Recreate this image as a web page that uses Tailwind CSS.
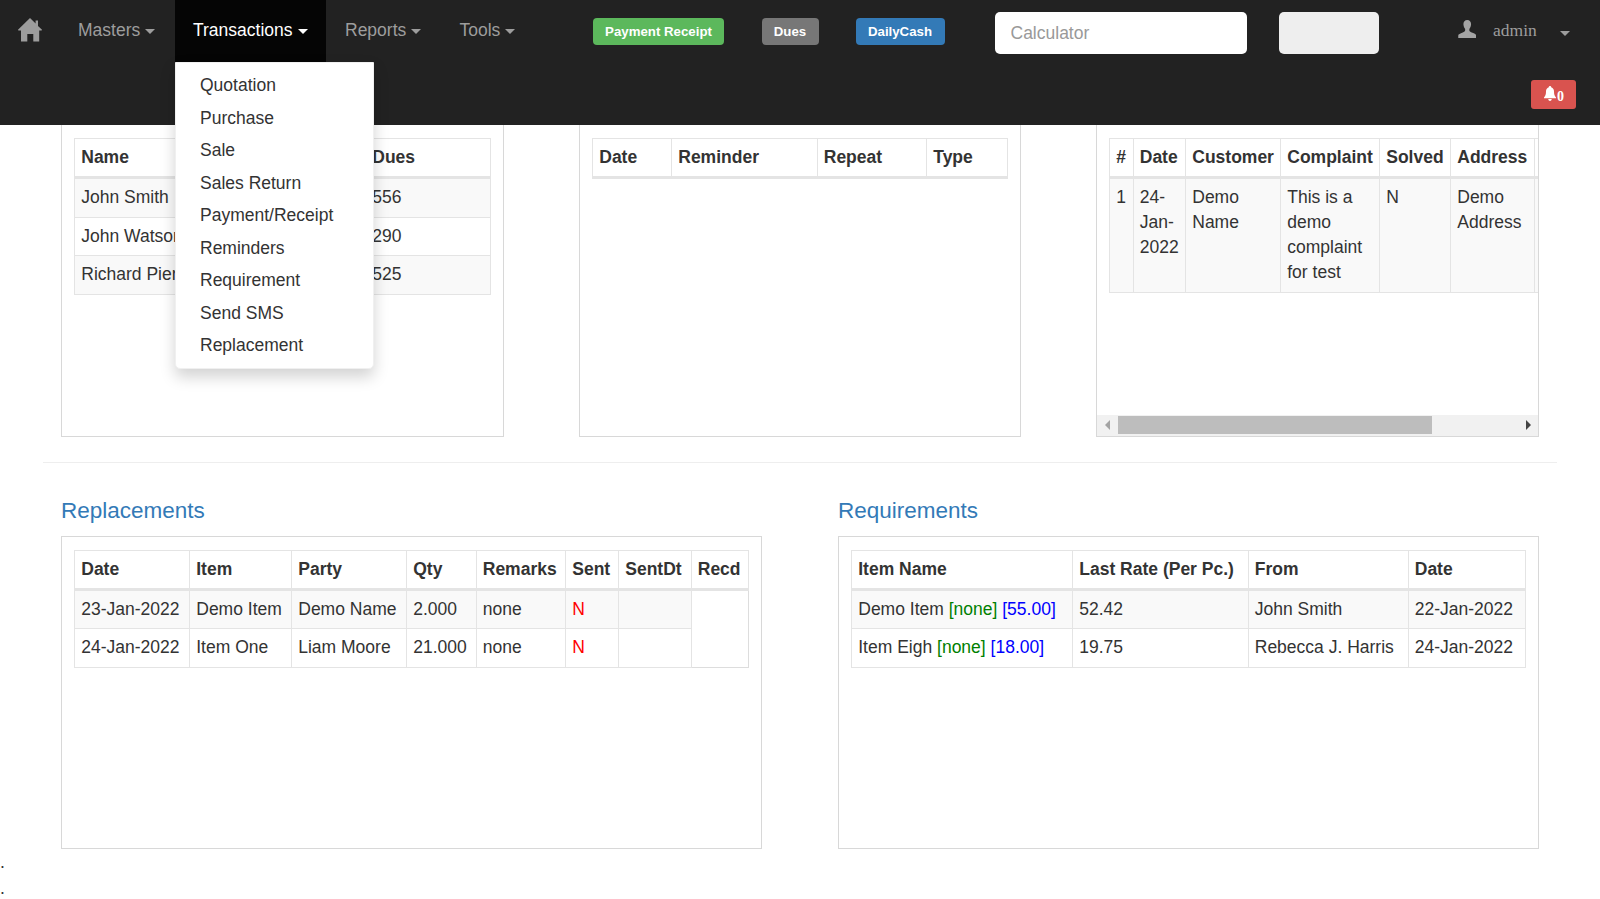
<!DOCTYPE html>
<html lang="en">
<head>
    <meta charset="UTF-8">
    <title>Dashboard</title>
    <script src="https://cdn.jsdelivr.net/npm/@tailwindcss/browser@4"></script>
</head>
<body class="h-[899px] overflow-hidden bg-white font-['Liberation_Sans',Arial,sans-serif] text-[17.5px] leading-[25px] text-[#333]">

    <!-- navbar -->
    <header class="relative z-10 flex h-[125px] flex-col bg-[#222] text-[#9d9d9d]">
        <div class="flex h-[62px] items-start">
            <nav class="flex h-[62px] w-[593px] items-stretch">
                <a class="flex w-[60px] items-start pl-[18px] pt-[17.5px]">
                    <svg class="h-[24px] w-[24px]" viewBox="0 0 24 24" fill="#9d9d9d"><path d="M12 0 L17.6 5.6 V2.5 H20 V8 L24.3 12 L23 12.6 H21.2 V23.5 H15.3 V16 H9.3 V23.5 H3 V12.6 H1 L-.3 12 Z"/></svg>
                </a>
                <a class="flex w-[115px] items-center pb-[1px] pl-[18px]">Masters<span class="ml-[5px] mt-[2px] border-x-[5px] border-t-[5px] border-x-transparent border-t-[#9d9d9d]"></span></a>
                <div class="relative w-[151px] bg-[#050505]">
                    <a class="flex h-[62px] items-center pb-[1px] pl-[18px] text-white">Transactions<span class="ml-[5px] mt-[2px] border-x-[5px] border-t-[5px] border-x-transparent border-t-white"></span></a>
                    <ul class="absolute left-0 top-[62px] w-[199px] rounded-b-[5px] border border-[#f0f0f0] bg-white pb-[5.5px] pt-[6.5px] text-[#333] shadow-[0_7.5px_15px_rgba(0,0,0,0.175)]">
                        <li class="py-[3.75px] pl-[24px]">Quotation</li>
                        <li class="py-[3.75px] pl-[24px]">Purchase</li>
                        <li class="py-[3.75px] pl-[24px]">Sale</li>
                        <li class="py-[3.75px] pl-[24px]">Sales Return</li>
                        <li class="py-[3.75px] pl-[24px]">Payment/Receipt</li>
                        <li class="py-[3.75px] pl-[24px]">Reminders</li>
                        <li class="py-[3.75px] pl-[24px]">Requirement</li>
                        <li class="py-[3.75px] pl-[24px]">Send SMS</li>
                        <li class="py-[3.75px] pl-[24px]">Replacement</li>
                    </ul>
                </div>
                <a class="flex w-[115px] items-center pb-[1px] pl-[19px]">Reports<span class="ml-[5px] mt-[2px] border-x-[5px] border-t-[5px] border-x-transparent border-t-[#9d9d9d]"></span></a>
                <a class="flex items-center pb-[1px] pl-[18.5px]">Tools<span class="ml-[5px] mt-[2px] border-x-[5px] border-t-[5px] border-x-transparent border-t-[#9d9d9d]"></span></a>
            </nav>

            <div class="mt-[18px] flex gap-[37px] text-[13.25px] font-bold leading-[27px] text-white">
                <a class="h-[27px] w-[131px] rounded-[4px] bg-[#5cb85c] text-center">Payment Receipt</a>
                <a class="ml-[0.5px] h-[27px] w-[57px] rounded-[4px] bg-[#777] text-center">Dues</a>
                <a class="h-[27px] w-[89px] rounded-[4px] bg-[#337ab7] text-center">DailyCash</a>
            </div>

            <input class="ml-[50px] mt-[12px] h-[42px] w-[252.5px] rounded-[5px] bg-white px-[16px] text-[17.5px] text-[#555] placeholder:text-[#999]" placeholder="Calculator">
            <div class="ml-[32px] mt-[12px] h-[42px] w-[99.5px] rounded-[5px] bg-[#eee]"></div>

            <div class="ml-[79px] mt-[20px] flex items-start">
                <svg class="h-[18px] w-[18.5px]" viewBox="0 0 18 18" fill="#a3a3a3"><path d="M9 0 C11.6 0 13 2 12.8 4.6 C12.7 6.4 12 7.8 11.1 8.9 V10.6 C11.1 11.4 12 11.8 13.5 12.5 C16 13.5 18 14.2 18 15.5 V18 H0 V15.5 C0 14.2 2 13.5 4.5 12.5 C6 11.8 6.9 11.4 6.9 10.6 V8.9 C6 7.8 5.3 6.4 5.2 4.6 C5 2 6.4 0 9 0 Z"/></svg>
                <span class="ml-[17px] mt-[-2px] font-['Liberation_Serif',serif]">admin</span>
                <span class="ml-[23px] mt-[10.5px] border-x-[5px] border-t-[5px] border-x-transparent border-t-[#9d9d9d]"></span>
            </div>
        </div>
        <div class="flex justify-end pr-[24px] pt-[18px]">
            <a class="flex h-[28.5px] w-[45px] items-start rounded-[3px] bg-[#d9534f] pl-[13px] pt-[6px] text-white">
                <svg class="h-[15px] w-[12px]" viewBox="0 0 12 15" fill="#fff"><path d="M6 0 C6.8 0 7.3 .6 7.2 1.3 C9.2 1.9 10 3.6 10 5.6 C10 8.6 10.6 10 12 11.4 V12.2 H0 V11.4 C1.4 10 2 8.6 2 5.6 C2 3.6 2.8 1.9 4.8 1.3 C4.7 .6 5.2 0 6 0 Z M4.2 13 H7.8 C7.6 14.2 6.9 15 6 15 C5.1 15 4.4 14.2 4.2 13 Z"/></svg>
                <span class="ml-[1px] mt-[3px] font-['Liberation_Serif',serif] text-[14px] font-bold leading-[16px]">0</span>
            </a>
        </div>
    </header>

    <main class="px-[61px]">
        <!-- top row: panels run under the navbar -->
        <div class="flex h-[311.5px] justify-between">
            <div class="h-full w-[443px] border-x border-b border-[#d8d8d8] pl-[12px] pt-[13px]">
                <table class="w-[416.5px] table-fixed border-collapse border border-[#ddd] [&_td]:border [&_td]:border-[#e4e4e4] [&_td]:px-[6.25px] [&_td]:py-[6.25px] [&_td]:align-top [&_th]:border [&_th]:border-b-[3px] [&_th]:border-[#e4e4e4] [&_th]:px-[6.25px] [&_th]:py-[6px] [&_th]:text-left [&_tbody_tr:nth-child(odd)]:bg-[#f9f9f9]">
                    <thead><tr><th class="w-[291px]">Name</th><th>Dues</th></tr></thead>
                    <tbody>
                        <tr><td>John Smith</td><td>556</td></tr>
                        <tr><td>John Watson</td><td>290</td></tr>
                        <tr><td>Richard Pierce</td><td>525</td></tr>
                    </tbody>
                </table>
            </div>

            <div class="h-full w-[442px] border-x border-b border-[#d8d8d8] pl-[12px] pt-[13px]">
                <table class="w-[415.5px] table-fixed border-collapse border border-[#ddd] [&_th]:border [&_th]:border-b-[3px] [&_th]:border-[#e4e4e4] [&_th]:px-[6.25px] [&_th]:py-[6px] [&_th]:text-left">
                    <thead><tr><th class="w-[79px]">Date</th><th class="w-[145.5px]">Reminder</th><th class="w-[109.5px]">Repeat</th><th>Type</th></tr></thead>
                </table>
            </div>

            <div class="flex h-full w-[443px] flex-col border-x border-b border-[#d8d8d8]">
                <div class="flex-1 overflow-hidden pl-[12px] pt-[13px]">
                    <table class="w-[545px] table-fixed border-collapse border border-[#ddd] [&_td]:border [&_td]:border-[#e4e4e4] [&_td]:px-[6.25px] [&_td]:py-[6.25px] [&_td]:align-top [&_th]:border [&_th]:border-b-[3px] [&_th]:border-[#e4e4e4] [&_th]:px-[6.25px] [&_th]:py-[6px] [&_th]:text-left [&_tbody_tr:nth-child(odd)]:bg-[#f9f9f9]">
                        <thead>
                            <tr>
                                <th class="w-[23.5px]">#</th>
                                <th class="w-[52.5px]">Date</th>
                                <th class="w-[95px]">Customer</th>
                                <th class="w-[99px]">Complaint</th>
                                <th class="w-[71px]">Solved</th>
                                <th class="w-[83.5px]">Address</th>
                                <th></th>
                            </tr>
                        </thead>
                        <tbody>
                            <tr><td>1</td><td>24-Jan-2022</td><td>Demo Name</td><td>This is a demo complaint for test</td><td>N</td><td>Demo Address</td><td></td></tr>
                        </tbody>
                    </table>
                </div>
                <!-- scrollbar -->
                <div class="flex h-[21px] items-center bg-[#f1f1f1]">
                    <span class="ml-[8px] mr-[8px] border-y-[5px] border-r-[5px] border-y-transparent border-r-[#a3a3a3]"></span>
                    <div class="h-[17.5px] w-[314px] bg-[#bdbdbd]"></div>
                    <span class="ml-auto mr-[7px] border-y-[5px] border-l-[5.5px] border-y-transparent border-l-[#444]"></span>
                </div>
            </div>
        </div>

        <hr class="mx-[-18px] mt-[25px] border-[#eee]">

        <!-- bottom row -->
        <div class="mt-[36px] flex justify-between">
            <section class="w-[701px]">
                <h3 class="text-[22.5px] leading-[24.5px] text-[#337ab7]">Replacements</h3>
                <div class="mt-[13px] h-[313px] border border-[#d8d8d8] pl-[12px] pt-[12.5px]">
                    <table class="w-[674.5px] table-fixed border-collapse border border-[#ddd] [&_td]:border [&_td]:border-[#e4e4e4] [&_td]:px-[6.25px] [&_td]:py-[6.25px] [&_td]:align-top [&_th]:border [&_th]:border-b-[3px] [&_th]:border-[#e4e4e4] [&_th]:px-[6.25px] [&_th]:py-[6px] [&_th]:text-left [&_tbody_tr:nth-child(odd)]:bg-[#f9f9f9]">
                        <thead>
                            <tr>
                                <th class="w-[115px]">Date</th>
                                <th class="w-[102px]">Item</th>
                                <th class="w-[115px]">Party</th>
                                <th class="w-[69.5px]">Qty</th>
                                <th class="w-[89.5px]">Remarks</th>
                                <th class="w-[53px]">Sent</th>
                                <th class="w-[72.5px]">SentDt</th>
                                <th>Recd</th>
                            </tr>
                        </thead>
                        <tbody>
                            <tr><td>23-Jan-2022</td><td>Demo Item</td><td>Demo Name</td><td>2.000</td><td>none</td><td class="text-[#f00]">N</td><td></td></tr>
                            <tr><td>24-Jan-2022</td><td>Item One</td><td>Liam Moore</td><td>21.000</td><td>none</td><td class="text-[#f00]">N</td><td></td></tr>
                        </tbody>
                    </table>
                </div>
            </section>

            <section class="w-[701px]">
                <h3 class="text-[22.5px] leading-[24.5px] text-[#337ab7]">Requirements</h3>
                <div class="mt-[13px] h-[313px] border border-[#d8d8d8] pl-[12px] pt-[12.5px]">
                    <table class="w-[674.5px] table-fixed border-collapse border border-[#ddd] [&_td]:border [&_td]:border-[#e4e4e4] [&_td]:px-[6.25px] [&_td]:py-[6.25px] [&_td]:align-top [&_th]:border [&_th]:border-b-[3px] [&_th]:border-[#e4e4e4] [&_th]:px-[6.25px] [&_th]:py-[6px] [&_th]:text-left [&_tbody_tr:nth-child(odd)]:bg-[#f9f9f9]">
                        <thead>
                            <tr>
                                <th class="w-[221px]">Item Name</th>
                                <th class="w-[175.5px]">Last Rate (Per Pc.)</th>
                                <th class="w-[160px]">From</th>
                                <th>Date</th>
                            </tr>
                        </thead>
                        <tbody>
                            <tr><td>Demo Item <span class="text-[#008000]">[none]</span> <span class="text-[#00f]">[55.00]</span></td><td>52.42</td><td>John Smith</td><td>22-Jan-2022</td></tr>
                            <tr><td>Item Eigh <span class="text-[#008000]">[none]</span> <span class="text-[#00f]">[18.00]</span></td><td>19.75</td><td>Rebecca J. Harris</td><td>24-Jan-2022</td></tr>
                        </tbody>
                    </table>
                </div>
            </section>
        </div>
    </main>

    <div class="text-[17.5px] leading-[26px]">
        <div>.</div>
        <div>.</div>
    </div>
</body>
</html>
